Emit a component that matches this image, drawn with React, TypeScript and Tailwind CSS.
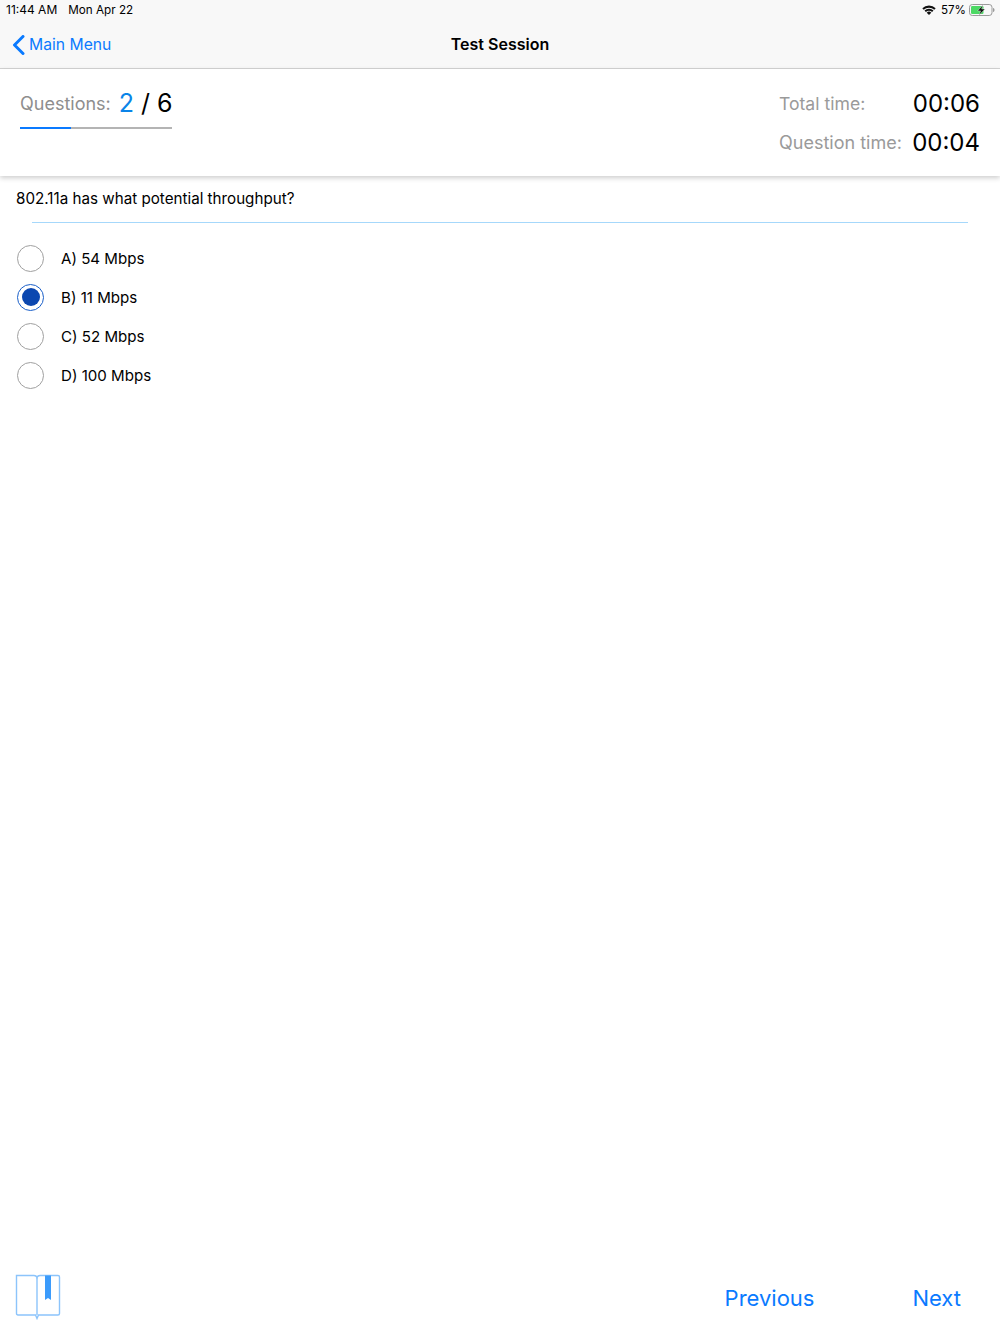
const FONT = "font-['Inter','Liberation_Sans',sans-serif]";

const options = [
  { label: "A) 54 Mbps", selected: false },
  { label: "B) 11 Mbps", selected: true },
  { label: "C) 52 Mbps", selected: false },
  { label: "D) 100 Mbps", selected: false },
];

function WifiIcon() {
  return (
    <svg width="14" height="10" viewBox="0 0 14 10" className="block">
      <path d="M0.3 3.3 A9.6 9.6 0 0 1 13.7 3.3 L12.3 4.8 A7.6 7.6 0 0 0 1.7 4.8 Z" fill="#111" />
      <path d="M2.5 5.5 A6.4 6.4 0 0 1 11.5 5.5 L10.1 7 A4.4 4.4 0 0 0 3.9 7 Z" fill="#111" />
      <path d="M4.7 7.7 A3.2 3.2 0 0 1 9.3 7.7 L7 10 Z" fill="#111" />
    </svg>
  );
}

function BatteryIcon() {
  return (
    <svg width="26" height="12" viewBox="0 0 26 12" className="block">
      <rect x="0.5" y="0.5" width="22.5" height="11" rx="2.8" fill="none" stroke="#9a9a9a" />
      <rect x="2" y="2" width="12.5" height="8" rx="1.2" fill="#4cd964" />
      <path d="M24 4 C25.2 4.3 25.5 5 25.5 6 C25.5 7 25.2 7.7 24 8 Z" fill="#9a9a9a" />
      <path d="M14 0.8 L8.6 6.9 H11.6 L10 11.2 L16 5 H12.7 Z" fill="#111" stroke="#f8f8f8" strokeWidth="0.4" />
    </svg>
  );
}

function BookIcon() {
  return (
    <svg width="46" height="46" viewBox="0 0 46 46" className="block">
      <path
        d="M1.5 1.5 H19 C20.5 1.5 21.6 2.3 22 3.5 C22.4 2.3 23.5 1.5 25 1.5 H43 C44 1.5 44.5 2 44.5 3 V39.5 C44.5 40.5 44 41 43 41 H23.5 L22 44.5 L20.5 41 H3 C2 41 1.5 40.5 1.5 39.5 Z"
        fill="none"
        stroke="#8cc4fb"
        strokeWidth="1.4"
      />
      <path d="M22 3.5 V41" stroke="#8cc4fb" strokeWidth="1.4" />
      <path d="M30 1.5 H36 V26 L33 24 L30 26 Z" fill="#3b9bfb" />
    </svg>
  );
}

function Radio({ selected }: { selected: boolean }) {
  if (selected) {
    return (
      <span className="flex h-[27px] w-[27px] items-center justify-center rounded-full border-[1.5px] border-[#1a5fc9]">
        <span className="h-[18px] w-[18px] rounded-full bg-[#0b47b0]" />
      </span>
    );
  }
  return <span className="h-[27px] w-[27px] rounded-full border-[1.5px] border-[#a0a0a0]" />;
}

export default function App() {
  return (
    <div className={`${FONT} flex h-[1334px] w-[1000px] flex-col overflow-hidden bg-white text-black`}>
      <header className="h-[69px] shrink-0 border-b border-[#d4d4d4] bg-[#f8f8f8]">
        <div className="flex h-[20px] items-center justify-between pl-[6px] pr-[5px] text-[12px]">
          <div className="flex items-center gap-[11px]">
            <span>11:44 AM</span>
            <span className="pt-[2px] text-[11.7px]">Mon Apr 22</span>
          </div>
          <div className="flex items-center gap-[3px]">
            <WifiIcon />
            <span className="ml-[2px] pt-[2px] text-[11.6px]">57%</span>
            <BatteryIcon />
          </div>
        </div>
        <div className="relative flex h-[48px] items-center justify-center">
          <div className="absolute left-[12px] top-0 flex h-full items-center gap-[4px] pt-[1px] text-[#0a7aff]">
            <svg width="13" height="20" viewBox="0 0 13 20" className="block">
              <path d="M11 1.5 L2.5 10 L11 18.5" fill="none" stroke="#0a7aff" strokeWidth="3" strokeLinecap="round" strokeLinejoin="round" />
            </svg>
            <span className="text-[15.7px]">Main Menu</span>
          </div>
          <span className="text-[16px] font-semibold">Test Session</span>
        </div>
      </header>

      <section className="relative flex h-[107px] shrink-0 justify-between pl-[20px] pr-[20px] shadow-[0_2px_5px_rgba(0,0,0,0.2)]">
        <div className="w-[152px] pt-[18px]">
          <div className="flex h-[34px] items-center whitespace-nowrap">
            <span className="pb-[2px] text-[18px] text-[#8e8e8e]">Questions:</span>
            <span className="ml-[8px] text-[25px] text-[#0a84e8]">2</span>
            <span className="ml-[7px] text-[25px]">/ 6</span>
          </div>
          <div className="mt-[6px] flex h-[2px]">
            <div className="w-[51px] bg-[#0a7aff]" />
            <div className="flex-1 bg-[#b4b4b4]" />
          </div>
        </div>
        <div className="flex w-[201px] flex-col gap-[5px] pt-[18px]">
          <div className="flex h-[34px] items-center justify-between whitespace-nowrap">
            <span className="text-[17.6px] text-[#9a9a9a]">Total time:</span>
            <span className="text-[24px]">00:06</span>
          </div>
          <div className="flex h-[34px] items-center justify-between whitespace-nowrap">
            <span className="pb-[1px] text-[18px] text-[#9a9a9a]">Question time:</span>
            <span className="text-[24px]">00:04</span>
          </div>
        </div>
      </section>

      <main className="flex-1">
        <p className="pl-[16px] pt-[13px] text-[15.2px] leading-[20px]">802.11a has what potential throughput?</p>
        <div className="mx-[32px] mt-[13px] h-px bg-[#a6d8fb]" />
        <ul className="mt-[21.5px] flex flex-col gap-[12px] pl-[17px]">
          {options.map((option) => (
            <li key={option.label} className="flex h-[27px] items-center gap-[17px] text-[15.1px]">
              <Radio selected={option.selected} />
              <span className="pt-[2px]">{option.label}</span>
            </li>
          ))}
        </ul>
      </main>

      <footer className="flex h-[69px] shrink-0 items-start justify-between pl-[15px] pr-[39px] pt-[9px]">
        <BookIcon />
        <div className="flex gap-[98px] pt-[8px] text-[22px] leading-[32px] text-[#0a7aff]">
          <span>Previous</span>
          <span>Next</span>
        </div>
      </footer>
    </div>
  );
}
